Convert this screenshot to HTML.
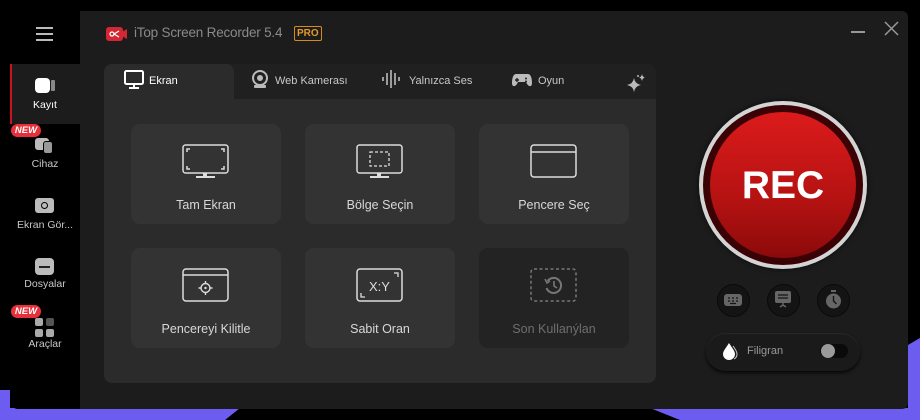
<!DOCTYPE html>
<html><head><meta charset="utf-8"><style>
*{margin:0;padding:0;box-sizing:border-box}
body{width:920px;height:420px;background:#000;position:relative;overflow:hidden;font-family:"Liberation Sans","DejaVu Sans",sans-serif;}
.abs{position:absolute}
.main{left:80px;top:11px;width:828px;height:398px;background:#1c1c1c;border-radius:0 6px 6px 0}
.side{left:10px;top:0;width:70px;height:409px;background:#000;border-radius:0 0 0 8px}
.title{left:134px;top:25px;color:#8a8a8a;font-size:13.5px;letter-spacing:-0.2px}
.pro{left:294px;top:26px;border:1px solid #d68a1c;color:#e29a2a;font-size:10px;font-weight:bold;padding:0 2px;border-radius:2px;line-height:13px}
.panel{left:104px;top:64px;width:552px;height:319px;background:#2b2b2b;border-radius:8px;overflow:hidden}
.tabbar{left:0;top:0;width:552px;height:35px;background:#202020}
.tab{position:absolute;top:0;height:35px;line-height:35px;color:#c8c8c8;font-size:11px}
.card{position:absolute;width:150px;height:100px;background:#333;border-radius:9px;color:#d8d8d8;font-size:12.5px;text-align:center}
.card .lbl{position:absolute;left:0;right:0;top:74px}
.card svg{position:absolute;left:51px;top:20px}
.si{position:absolute;left:10px;width:70px;text-align:center;color:#c8c8c8;font-size:10.5px}
.new{position:absolute;left:11px;width:30px;height:13px;background:#e8303a;border-radius:7px;color:#fff;font-size:9.5px;font-weight:bold;font-style:italic;text-align:center;line-height:13px}
.sb{position:absolute;top:284px;width:33px;height:33px;border-radius:50%;background:#141414;border:1px solid #0a0a0a}
</style></head><body>
<svg class="abs" style="left:0;top:0" width="920" height="420"><polygon points="0,390 10,390 10,408 240,408 225,420 0,420" fill="#6d5cf0"/><polygon points="650,408 908,408 908,345 920,338 920,420 680,420" fill="#6d5cf0"/></svg>
<div class="abs side"></div>
<div class="abs main"></div>
<div class="abs" style="left:36px;top:27px;width:17px;height:2px;background:#bbb;box-shadow:0 6px 0 #bbb,0 12px 0 #bbb"></div>
<div class="abs" style="left:10px;top:64px;width:70px;height:60px;background:#1c1c1c;border-left:2px solid #c8141e"></div>
<div class="abs" style="left:35px;top:78px;width:15px;height:15px;background:#fff;border-radius:4px"></div>
<div class="abs" style="left:51px;top:80px;width:4px;height:11px;background:#888;border-radius:1px"></div>
<div class="si" style="top:99px;color:#fff">Kayıt</div>
<div class="new" style="top:124px">NEW</div>
<div class="abs" style="left:35px;top:138px;width:14px;height:12px;background:#bbb;border-radius:3px"></div>
<div class="abs" style="left:43px;top:141px;width:10px;height:13px;background:#999;border-radius:3px;border:1px solid #000"></div>
<div class="si" style="top:158px">Cihaz</div>
<div class="abs" style="left:35px;top:198px;width:19px;height:15px;background:#bbb;border-radius:3px"></div>
<div class="abs" style="left:41px;top:202px;width:7px;height:7px;border:1.5px solid #000;border-radius:50%"></div>
<div class="si" style="top:219px">Ekran Gör...</div>
<div class="abs" style="left:35px;top:258px;width:19px;height:17px;background:#bbb;border-radius:4px"></div>
<div class="abs" style="left:39px;top:266px;width:11px;height:2px;background:#222"></div>
<div class="si" style="top:278px">Dosyalar</div>
<div class="new" style="top:305px">NEW</div>
<div class="abs" style="left:35px;top:318px;width:8px;height:8px;background:#aaa;border-radius:2px;box-shadow:11px 0 0 #555,0 11px 0 #aaa,11px 11px 0 #aaa"></div>
<div class="si" style="top:338px">Araçlar</div>
<svg class="abs" style="left:106px;top:27px" width="22" height="14"><rect x="0" y="0" width="17" height="14" rx="3" fill="#d32833"/><polygon points="16,5 21,2 21,12 16,9" fill="#d32833"/><circle cx="6" cy="7" r="2" fill="none" stroke="#fff" stroke-width="1.3"/><path d="M8 7 L13 4 M8 7 L13 10" stroke="#fff" stroke-width="1.3"/></svg>
<div class="abs title">iTop Screen Recorder 5.4</div>
<div class="abs pro">PRO</div>
<div class="abs" style="left:851px;top:31px;width:14px;height:1.5px;background:#999"></div>
<svg class="abs" style="left:884px;top:21px" width="15" height="15"><path d="M1 1L14 14M14 1L1 14" stroke="#999" stroke-width="1.5"/></svg>
<div class="abs panel">
 <div class="abs tabbar"></div>
 <div class="abs" style="left:0;top:0;width:130px;height:36px;background:#2b2b2b;border-radius:8px 8px 0 0"></div>
 <div class="tab" style="left:20px;color:#fff"><svg style="vertical-align:-5px;margin-right:5px" width="20" height="19"><rect x="1" y="1" width="18" height="13" rx="1.5" fill="none" stroke="#fff" stroke-width="2"/><rect x="9" y="14" width="2" height="3" fill="#fff"/><rect x="5" y="17" width="10" height="2" fill="#fff"/></svg>Ekran</div>
 <div class="tab" style="left:147px"><svg style="vertical-align:-5px;margin-right:6px" width="18" height="19"><circle cx="9" cy="8" r="7" fill="none" stroke="#bbb" stroke-width="2"/><circle cx="9" cy="8" r="3" fill="#bbb"/><rect x="3" y="15" width="12" height="3" rx="1" fill="#bbb"/></svg>Web Kamerası</div>
 <div class="tab" style="left:278px"><svg style="vertical-align:-4px;margin-right:7px" width="20" height="18"><path d="M1 7v4M5 3v12M9 0v18M13 3v12M17 7v4" stroke="#bbb" stroke-width="1.6"/></svg>Yalnızca Ses</div>
 <div class="tab" style="left:408px"><svg style="vertical-align:-3px;margin-right:6px" width="20" height="14"><path d="M4 1h12c3 0 4 5 4 9s-3 4-5 1l-1-2H6l-1 2c-2 3-5 3-5-1s1-9 4-9z" fill="#bbb"/><path d="M5 5v4M3 7h4" stroke="#202020" stroke-width="1.4"/><circle cx="14" cy="5.5" r="1" fill="#202020"/><circle cx="14" cy="8.5" r="1" fill="#202020"/></svg>Oyun</div>
 <svg class="abs" style="left:522px;top:9px" width="22" height="20"><path d="M8 5 Q9 11 15 12 Q9 13 8 19 Q7 13 1 12 Q7 11 8 5z" fill="#bbb"/><path d="M16 1 Q16.5 4 19 4.5 Q16.5 5 16 8 Q15.5 5 13 4.5 Q15.5 4 16 1z" fill="#bbb"/><circle cx="12" cy="3" r="1" fill="#bbb"/></svg>
 <div class="card" style="left:27px;top:60px"><svg width="48" height="36"><rect x="1" y="1" width="45" height="28" rx="2.5" fill="none" stroke="#ddd" stroke-width="1.5"/><path d="M5 8V5h3M39 5h3v3M42 22v3h-3M8 25H5v-3" stroke="#ddd" stroke-width="1.5" fill="none"/><rect x="21" y="29" width="4" height="3" fill="#ddd"/><rect x="14" y="32" width="19" height="2" fill="#ddd"/></svg><div class="lbl">Tam Ekran</div></div>
 <div class="card" style="left:201px;top:60px"><svg width="48" height="36"><rect x="1" y="1" width="45" height="28" rx="2.5" fill="none" stroke="#ddd" stroke-width="1.5"/><rect x="14" y="8" width="19" height="14" fill="none" stroke="#ddd" stroke-width="1.3" stroke-dasharray="3 2"/><rect x="21" y="29" width="4" height="3" fill="#ddd"/><rect x="14" y="32" width="19" height="2" fill="#ddd"/></svg><div class="lbl">Bölge Seçin</div></div>
 <div class="card" style="left:375px;top:60px"><svg width="48" height="36"><rect x="1" y="1" width="45" height="32" rx="3" fill="none" stroke="#ddd" stroke-width="1.5"/><path d="M1 8h45" stroke="#ddd" stroke-width="1.5"/></svg><div class="lbl">Pencere Seç</div></div>
 <div class="card" style="left:27px;top:184px"><svg width="48" height="36"><rect x="1" y="1" width="45" height="32" rx="3" fill="none" stroke="#ddd" stroke-width="1.5"/><path d="M1 7h45" stroke="#ddd" stroke-width="1.5"/><circle cx="23.5" cy="20" r="4.5" fill="none" stroke="#ddd" stroke-width="1.4"/><circle cx="23.5" cy="20" r="1.2" fill="#ddd"/><path d="M23.5 13v2.5M23.5 24.5v2.5M16.5 20h2.5M28 20h2.5" stroke="#ddd" stroke-width="1.4"/></svg><div class="lbl">Pencereyi Kilitle</div></div>
 <div class="card" style="left:201px;top:184px"><svg width="48" height="36"><rect x="1" y="1" width="45" height="32" rx="3" fill="none" stroke="#ddd" stroke-width="1.5"/><path d="M38 5h4v4M5 25v4h4" stroke="#ddd" stroke-width="1.3" fill="none"/><text x="23.5" y="23" text-anchor="middle" font-family="Liberation Sans" font-size="13" fill="#ddd">X:Y</text></svg><div class="lbl">Sabit Oran</div></div>
 <div class="card" style="left:375px;top:184px;background:#232323;color:#6e6e6e"><svg width="48" height="36"><rect x="1" y="1" width="45" height="32" rx="3" fill="none" stroke="#777" stroke-width="1.5" stroke-dasharray="3 2.5"/><path d="M17.5 13 A7.5 7.5 0 1 1 16.5 20" fill="none" stroke="#777" stroke-width="2"/><path d="M15 11l2 4 3-2" stroke="#777" stroke-width="1.5" fill="none"/><path d="M24 13v5l3 2" stroke="#777" stroke-width="1.6" fill="none"/></svg><div class="lbl">Son Kullanýlan</div></div>
</div>
<div class="abs" style="left:699px;top:101px;width:168px;height:168px;border-radius:50%;background:#d4d4d4;box-shadow:0 0 6px rgba(0,0,0,.6)"></div>
<div class="abs" style="left:703px;top:105px;width:160px;height:160px;border-radius:50%;background:#3a0204"></div>
<div class="abs" style="left:710px;top:112px;width:146px;height:146px;border-radius:50%;background:linear-gradient(#dc1b1b,#b51212 60%,#8c0a0a)"></div>
<div class="abs" style="left:699px;top:164px;width:168px;text-align:center;color:#fff;font-size:39px;font-weight:bold;line-height:44px">REC</div>
<div class="sb" style="left:717px"></div><div class="sb" style="left:767px"></div><div class="sb" style="left:817px"></div>
<svg class="abs" style="left:724px;top:292px" width="18" height="16"><rect x="0" y="2" width="18" height="12" rx="3" fill="#666"/><path d="M4 6h2M8 6h2M12 6h2M4 9h2M8 9h2M12 9h2M6 11.5h6" stroke="#141414" stroke-width="1.2"/></svg>
<svg class="abs" style="left:775px;top:291px" width="16" height="18"><rect x="0" y="0" width="16" height="12" rx="2" fill="#666"/><path d="M3 4h10M3 7h10" stroke="#141414" stroke-width="1.2"/><path d="M8 12v3M5 16l3-2 3 2" stroke="#666" stroke-width="1.4" fill="none"/></svg>
<svg class="abs" style="left:825px;top:290px" width="17" height="19"><rect x="6" y="0" width="5" height="2" fill="#666"/><circle cx="8.5" cy="11" r="7.5" fill="#666"/><path d="M8.5 6v5l3 3" stroke="#141414" stroke-width="1.4" fill="none"/></svg>
<div class="abs" style="left:706px;top:333px;width:154px;height:38px;border-radius:19px;background:#1a1a1a;box-shadow:0 2px 3px #080808,inset 0 1px 1px #2a2a2a"></div>
<svg class="abs" style="left:722px;top:342px" width="16" height="18"><path d="M7 1 C4 6 1 9 1 12 a6 6 0 0 0 12 0 C13 9 10 6 7 1z" fill="#fff"/><path d="M11 4 C14 8 15 10 15 12 c0 2-1 4-3 5" stroke="#ccc" fill="none"/></svg>
<div class="abs" style="left:747px;top:345px;color:#999;font-size:11px">Filigran</div>
<div class="abs" style="left:820px;top:344px;width:28px;height:14px;border-radius:7px;background:#0a0a0a"></div>
<div class="abs" style="left:821px;top:344px;width:14px;height:14px;border-radius:50%;background:#9a9a9a"></div>
</body></html>
